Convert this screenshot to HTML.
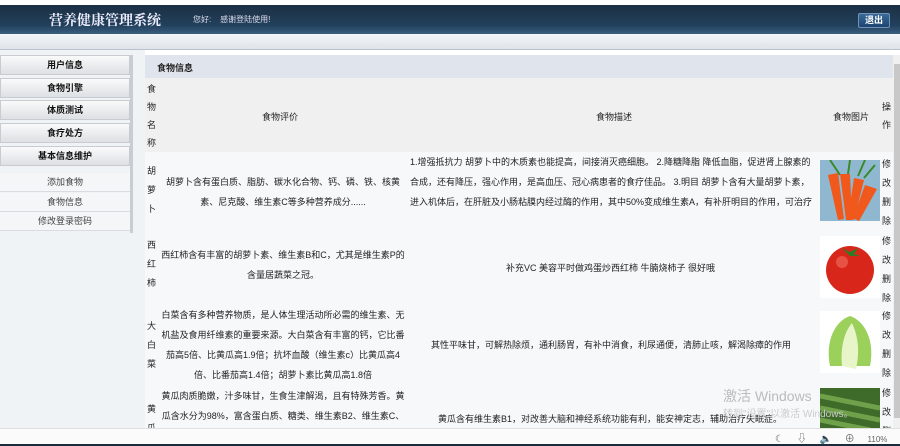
<!DOCTYPE html><html><head><meta charset="utf-8"><style>
*{margin:0;padding:0;box-sizing:border-box}
body{width:900px;height:446px;overflow:hidden;background:#fff;font-family:"Liberation Sans","Noto Sans CJK SC",sans-serif;font-size:9px;color:#222;position:relative}
.a{position:absolute}
.hdr{left:0;top:5px;width:900px;height:29px;background:linear-gradient(#1c2f43,#22405c 70%,#3a5f80)}
.band{left:0;top:34px;width:900px;height:16px;background:linear-gradient(#f4f6f8,#dfe4ea);border-bottom:1px solid #b8c2cc}
.side{left:0;top:50px;width:145px;height:378px;background:#f0f3f6}
.btn{left:0;width:130px;height:20px;background:linear-gradient(#fafafa,#dde0e4);border:1px solid #c8ccd2;font-weight:bold;font-size:9px;text-align:center;line-height:19px;color:#111}
.sub{left:0;width:130px;height:19px;border-bottom:1px solid #d8dce0;text-align:center;line-height:19px;color:#444;font-size:9px;background:#f5f6f8}
.cell{display:flex;align-items:center;justify-content:center;text-align:center}
.v{width:13px;line-height:18px;text-align:center}
.t{line-height:20px}
.img{border-radius:0}
</style></head><body>
<div class="a hdr"></div>
<div class="a" style="left:49px;top:10px;color:#eef;font-size:14px;font-weight:bold;font-family:'Noto Serif CJK SC',serif">营养健康管理系统</div>
<div class="a" style="left:193px;top:14px;color:#dde;font-size:8px">您好:&nbsp;&nbsp;&nbsp;&nbsp;感谢登陆使用!</div>
<div class="a" style="left:858px;top:13px;width:32px;height:15px;background:linear-gradient(#3a6a98,#1d4470);border:1px solid #6f93b8;border-radius:2px;color:#fff;font-size:9px;text-align:center;line-height:13px;font-weight:bold">退出</div>
<div class="a band"></div>
<div class="a side"></div>
<div class="a btn" style="top:55px">用户信息</div>
<div class="a btn" style="top:78px">食物引擎</div>
<div class="a btn" style="top:100px">体质测试</div>
<div class="a btn" style="top:123px">食疗处方</div>
<div class="a btn" style="top:146px">基本信息维护</div>
<div class="a" style="left:130px;top:55px;width:3px;height:178px;background:#c8cdd3"></div>
<div class="a sub" style="top:173px">添加食物</div>
<div class="a sub" style="top:193px">食物信息</div>
<div class="a sub" style="top:212px">修改登录密码</div>
<div class="a" style="left:145px;top:55px;width:748px;height:23px;background:#e0e4ec"></div>
<div class="a" style="left:157px;top:61px;font-size:9px;font-weight:bold;color:#222">食物信息</div>
<div class="a" style="left:145px;top:78px;width:748px;height:74px;background:#f0f0f0"></div>
<div class="a" style="left:145px;top:152px;width:748px;height:276px;background:#f7f8fa"></div>
<div class="a v" style="left:145px;top:80px">食<br>物<br>名<br>称</div>
<div class="a" style="left:262px;top:110px">食物评价</div>
<div class="a" style="left:596px;top:110px">食物描述</div>
<div class="a" style="left:833px;top:110px">食物图片</div>
<div class="a v" style="left:880px;top:98px">操<br>作</div>
<!-- row1 -->
<div class="a v" style="left:145px;top:162px;line-height:19px">胡<br>萝<br>卜</div>
<div class="a t" style="left:160px;top:172px;width:246px;text-align:center">胡萝卜含有蛋白质、脂肪、碳水化合物、钙、磷、铁、核黄素、尼克酸、维生素C等多种营养成分......</div>
<div class="a t" style="left:410px;top:152px;width:408px;height:60px;overflow:hidden">1.增强抵抗力 胡萝卜中的木质素也能提高，间接消灭癌细胞。 2.降糖降脂 降低血脂，促进肾上腺素的合成，还有降压，强心作用，是高血压、冠心病患者的食疗佳品。 3.明目 胡萝卜含有大量胡萝卜素，进入机体后，在肝脏及小肠粘膜内经过酶的作用，其中50%变成维生素A，有补肝明目的作用，可治疗</div>
<svg class="a" style="left:820px;top:160px" width="60" height="61"><rect width="60" height="61" fill="#8fb8d0"/><g stroke="#3a8a2a" stroke-width="2"><path d="M10 0L20 15M30 0L28 14M45 0L38 16M55 5L44 18"/></g><g fill="#f0581c"><path d="M8 15l10-2 6 46-6 1z"/><path d="M20 14l10 0 2 46-6 0z"/><path d="M34 18l10 2-10 40-6-2z"/><path d="M45 25l12 4-18 32-6-3z"/></g></svg>
<div class="a v" style="left:880px;top:155px;line-height:19px">修<br>改<br>删<br>除</div>
<!-- row2 -->
<div class="a v" style="left:145px;top:236px;line-height:19px">西<br>红<br>柿</div>
<div class="a t" style="left:158px;top:245px;width:250px;text-align:center">西红柿含有丰富的胡萝卜素、维生素B和C，尤其是维生素P的含量居蔬菜之冠。</div>
<div class="a" style="left:506px;top:261px">补充VC 美容平时做鸡蛋炒西红柿 牛腩烧柿子 很好哦</div>
<svg class="a" style="left:820px;top:236px" width="60" height="62"><rect width="60" height="62" fill="#fff"/><circle cx="30" cy="34" r="24" fill="#d8261a"/><circle cx="22" cy="26" r="6" fill="#f07060" opacity=".6"/><path d="M22 12l8 4 8-4-4 6 6 2-10 0z" fill="#2f7a22"/></svg>
<div class="a v" style="left:880px;top:232px;line-height:19px">修<br>改<br>删<br>除</div>
<!-- row3 -->
<div class="a v" style="left:145px;top:317px;line-height:19px">大<br>白<br>菜</div>
<div class="a t" style="left:158px;top:305px;width:250px;text-align:center">白菜含有多种营养物质，是人体生理活动所必需的维生素、无机盐及食用纤维素的重要来源。大白菜含有丰富的钙，它比番茄高5倍、比黄瓜高1.9倍；抗坏血酸（维生素c）比黄瓜高4倍、比番茄高1.4倍；胡萝卜素比黄瓜高1.8倍</div>
<div class="a" style="left:431px;top:338px">其性平味甘，可解热除烦，通利肠胃，有补中消食，利尿通便，清肺止咳，解渴除瘴的作用</div>
<svg class="a" style="left:820px;top:311px" width="60" height="62"><rect width="60" height="62" fill="#fff"/><path d="M10 55C5 30 15 10 30 5C45 10 55 30 50 55z" fill="#9bd05a"/><path d="M22 55C20 35 25 20 32 12C38 25 40 40 36 58z" fill="#e8f5c8"/></svg>
<div class="a v" style="left:880px;top:307px;line-height:19px">修<br>改<br>删<br>除</div>
<!-- row4 -->
<div class="a v" style="left:145px;top:400px;line-height:19px">黄<br>瓜</div>
<div class="a t" style="left:158px;top:386px;width:250px;text-align:center">黄瓜肉质脆嫩，汁多味甘，生食生津解渴，且有特殊芳香。黄瓜含水分为98%，富含蛋白质、糖类、维生素B2、维生素C、</div>
<div class="a" style="left:438px;top:412px">黄瓜含有维生素B1，对改善大脑和神经系统功能有利，能安神定志，辅助治疗失眠症。</div>
<svg class="a" style="left:820px;top:388px" width="60" height="40"><rect width="60" height="40" fill="#3e6a2a"/><g stroke="#6fa04a" stroke-width="5"><path d="M0 8L60 20M0 20L60 32M0 32L50 42"/></g></svg>
<div class="a v" style="left:880px;top:384px;line-height:19px">修<br>改<br>删</div>
<div class="a" style="left:723px;top:386px;color:#bbb;font-size:14px">激活 Windows</div>
<div class="a" style="left:723px;top:405px;color:#ccc;font-size:10px">转到"设置"以激活 Windows。</div>
<div class="a" style="left:893px;top:55px;width:7px;height:373px;background:#f0f0f0"></div>
<div class="a" style="left:894px;top:64px;width:6px;height:354px;background:#c8c8c8"></div>
<div class="a" style="left:0;top:428px;width:900px;height:18px;background:#fbfbfb;border-top:1px solid #e0e0e0"></div>
<div class="a" style="left:0;top:444px;width:900px;height:2px;background:#1a2b3c"></div>
<div class="a" style="left:775px;top:430px;color:#666;font-size:10px;word-spacing:10px">☾ ⇩ 🔈 ⊕ <span style="font-size:8px;word-spacing:0">110%</span></div>
</body></html>
